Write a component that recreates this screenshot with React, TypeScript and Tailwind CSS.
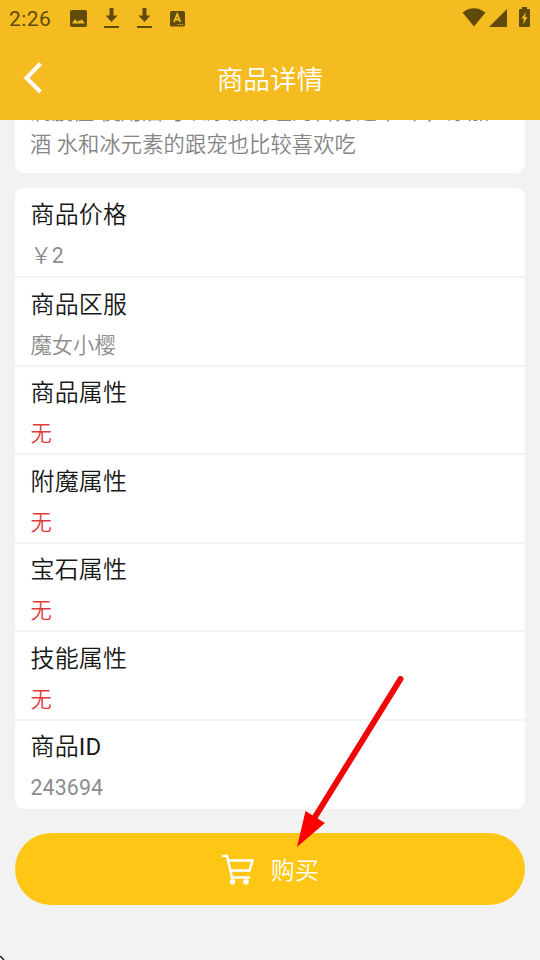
import React from "react";

const rows = [
  { label: "商品价格", value: "￥2", tone: "text-[#8d8d8d]", size: "h-[90px] pt-[9px]" },
  { label: "商品区服", value: "魔女小樱", tone: "text-[#8d8d8d]", size: "h-[89px] pt-[9px]" },
  { label: "商品属性", value: "无", tone: "text-[#df3e3e]", size: "h-[88px] pt-2" },
  { label: "附魔属性", value: "无", tone: "text-[#df3e3e]", size: "h-[89px] pt-[9px]" },
  { label: "宝石属性", value: "无", tone: "text-[#df3e3e]", size: "h-[88px] pt-2" },
  { label: "技能属性", value: "无", tone: "text-[#df3e3e]", size: "h-[89px] pt-[9px]" },
  { label: "商品ID", value: "243694", tone: "text-[#8d8d8d]", size: "h-[88px] pt-2" },
];

function Download() {
  return (
    <svg width="16" height="22" viewBox="0 0 16 22" fill="#604b0b">
      <path d="M5.500 1h4v7.500H13.500L7.500 15 1.500 8.500h4zM0 19h15v2H0z" />
    </svg>
  );
}

function StatusBar() {
  return (
    <div className="flex h-9 items-center pl-[9px] pr-[9px] text-[#604b0b]">
      <span className="w-[61px] pt-0.5 text-[21px] leading-9 tracking-[0.4px]">2:26</span>
      <svg width="17" height="17" viewBox="0 0 17 17" className="mt-px">
        <rect width="17" height="17" rx="2" fill="#604b0b" />
        <path d="M2 13.500 5 9l2.500 3 1.500-2 1 1.500 1.500-2.500 3.500 4.500z" fill="#f4bc20" />
      </svg>
      <div className="ml-[17px] flex gap-[17px]"><Download /><Download /></div>
      <svg width="15" height="17" viewBox="0 0 15 17" className="ml-[17px]">
        <rect y="1" width="15" height="15.500" rx="1.500" fill="#604b0b" />
        <path d="M4 12 7.200 4.200 10.400 12M5 9.500h4.400" stroke="#f4bc20" strokeWidth="1.800" fill="none" />
        <path d="M7.500 14.500h1.200m1 0h1.200m1 0h1.200" stroke="#f4bc20" strokeWidth="1" />
      </svg>
      <svg width="70" height="24" viewBox="0 0 70 24" fill="#604b0b" className="ml-auto">
        <path d="M1.500 6.500Q13-2 24.500 6.500L13 20.500z" />
        <path d="M28 21 46 3v18z" />
        <path d="M61 3V1h5v2h2q1 0 1 1v16q0 1-1 1h-9q-1 0-1-1V4q0-1 1-1z" />
        <path d="M65 6 60.500 12.500h2.500l-1 6 4.500-7.500H64z" fill="#f4bc20" />
      </svg>
    </div>
  );
}

export default function App() {
  return (
    <main className="relative h-[960px] w-[540px] overflow-hidden bg-[#f2f2f2] font-[Roboto,'Noto_Sans_CJK_SC',sans-serif]">
      <header className="h-[120px] bg-[#f4bc20]">
        <StatusBar />
        <div className="grid h-[84px] grid-cols-[60px_1fr_60px] items-center">
          <svg width="19" height="32" viewBox="0 0 19 32" className="ml-[23px]">
            <path d="M17.500 1.500 3.500 16l14 14" fill="none" stroke="white" strokeWidth="4" />
          </svg>
          <h1 className="pt-[5px] text-center text-[26.7px] font-[350] text-white">商品详情</h1>
        </div>
      </header>

      <section className="mx-[15px] flex h-[53px] flex-col justify-end overflow-hidden rounded-b-[9px] bg-white px-[15px] pb-3 text-[21.3px] font-[350] leading-8 tracking-[0.080px] text-[#858585]">
        <p className="mb-px whitespace-nowrap">满腹值 使用后可以添加清理的百分之十 中，添加</p>
        <p className="whitespace-nowrap">酒 水和冰元素的跟宠也比较喜欢吃</p>
      </section>

      <section className="mx-[15px] mt-[15px] h-[621px] overflow-hidden rounded-[9px] bg-white">
        {rows.map((row) => (
          <div key={row.label} className={`${row.size} border-b-2 border-[#f3f3f3] pl-[15.500px] pr-[15px] last:border-0`}>
            <div className="text-[24px] font-[350] leading-9 tracking-[0.150px] text-[#181818]">
              {row.label === "商品ID" ? <>商品<span className="font-normal">ID</span></> : row.label}
            </div>
            <div className={`mt-[5px] text-[21.3px] leading-9 ${row.tone} ${row.value === "243694" ? "font-normal tracking-[0.150px]" : "font-[350]"}`}>
              {row.value === "￥2" ? <>￥<span className="font-normal">2</span></> : row.value}
            </div>
          </div>
        ))}
      </section>

      <button className="mx-[15px] mt-6 flex h-[72px] w-[510px] items-center justify-center gap-[17px] rounded-full bg-[#ffc615] text-[24px] font-[350] text-white">
        <svg width="33" height="31" viewBox="0 0 33 31" fill="none" stroke="white">
          <path d="M1 2h5L11 23.500h18M7 6.500H31.500L28.500 16.500H9.500" strokeWidth="2.600" />
          <circle cx="11.500" cy="27.700" r="2.800" fill="white" stroke="none" />
          <circle cx="25" cy="27.700" r="2.800" fill="white" stroke="none" />
        </svg>
        <span className="pt-[3px] tracking-[0.300px]">购买</span>
      </button>

      <svg className="pointer-events-none absolute left-[280px] top-[660px]" width="140" height="200" viewBox="0 0 140 200">
        <path d="M120.500 19 35 157" stroke="#ee0808" strokeWidth="6" strokeLinecap="round" />
        <path d="M25.500 151 45 163 17 187z" fill="#ff0000" />
      </svg>
      <svg className="pointer-events-none absolute bottom-0 left-0" width="6" height="6" viewBox="0 0 6 6">
        <path d="M0 1 5 6H0z" fill="#fff" />
        <path d="M0 2 4 6" stroke="#111" strokeWidth="1.400" />
      </svg>
    </main>
  );
}
